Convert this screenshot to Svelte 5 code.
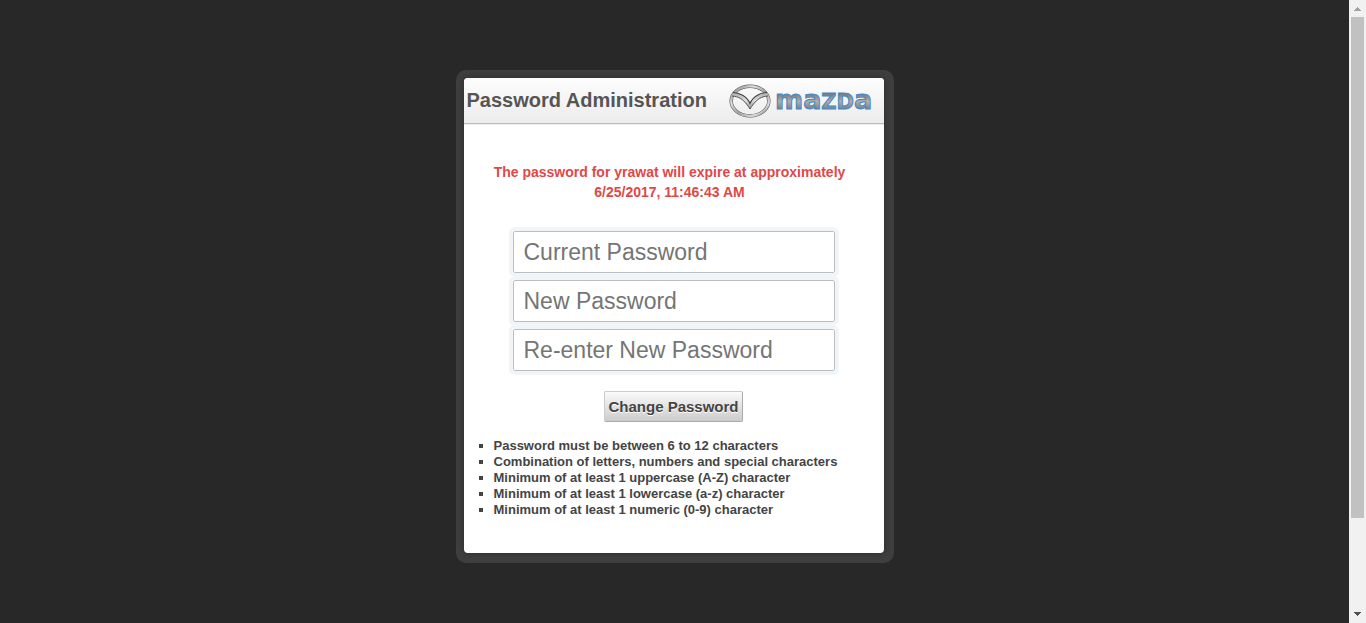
<script>
  const fields = [
    { id: 'current', label: 'Current Password' },
    { id: 'new', label: 'New Password' },
    { id: 'confirm', label: 'Re-enter New Password' }
  ];
  const rules = [
    'Password must be between 6 to 12 characters',
    'Combination of letters, numbers and special characters',
    'Minimum of at least 1 uppercase (A-Z) character',
    'Minimum of at least 1 lowercase (a-z) character',
    'Minimum of at least 1 numeric (0-9) character'
  ];
</script>

<div class="page">
  <main>
    <div class="frame">
      <section class="card">
        <header>
          <h1>Password Administration</h1>
          <svg class="logo" width="146" height="36" viewBox="0 0 146 36" role="img" aria-label="Mazda">
            <defs>
              <linearGradient id="chrome" x1="0" y1="0" x2="1" y2="1">
                <stop offset="0" stop-color="#77797b" />
                <stop offset="0.3" stop-color="#dadbdc" />
                <stop offset="0.55" stop-color="#a0a1a3" />
                <stop offset="0.8" stop-color="#dcdddf" />
                <stop offset="1" stop-color="#5a5b5d" />
              </linearGradient>
              <linearGradient id="wing" x1="0" y1="0" x2="0" y2="1">
                <stop offset="0" stop-color="#a5a7a9" />
                <stop offset="0.5" stop-color="#dedfe0" />
                <stop offset="1" stop-color="#8f9193" />
              </linearGradient>
              <linearGradient id="steel" gradientUnits="userSpaceOnUse" x1="0" y1="11" x2="0" y2="26">
                <stop offset="0" stop-color="#777b80" />
                <stop offset="0.5" stop-color="#b0aeac" />
                <stop offset="1" stop-color="#7d8084" />
              </linearGradient>
            </defs>
            <ellipse cx="22" cy="18" rx="18.8" ry="14.8" fill="none" stroke="#4d4e50" stroke-width="3.4" />
            <ellipse cx="22" cy="18" rx="18.8" ry="14.8" fill="none" stroke="url(#chrome)" stroke-width="2.4" />
            <path d="M5 9 C11 9.5 19 13 22 20.5 C25 13 33 9.5 39 9 L40 13 C33 13.5 29 16.5 25.5 21 C24 23 23 24 22 26 C21 24 20 23 18.5 21 C15 16.5 11 13.5 4 13 Z" fill="url(#wing)" />
            <path d="M5 9.5 C11 9.5 19 13 22 20.5 C25 13 33 9.5 39 9.5" fill="none" stroke="#3f4042" stroke-width="1.1" />
            <path d="M4 13 C11 13.5 15 16.5 18.5 21 C20 23 21 24 22 26 C23 24 24 23 25.5 21 C29 16.5 33 13.5 40 13" fill="none" stroke="#525355" stroke-width="1" />
            <text class="wordmark" x="47" y="26" fill="url(#steel)">ma<tspan class="capital">ZD</tspan>a</text>
          </svg>
        </header>
        <p class="notice">The password for yrawat will expire at approximately 6/25/2017, 11:46:43 AM</p>
        <form onsubmit={(e) => e.preventDefault()}>
          {#each fields as field}
            <input type="password" id={field.id} name={field.id} placeholder={field.label} aria-label={field.label} />
          {/each}
          <button type="submit">Change Password</button>
        </form>
        <ul>
          {#each rules as rule}
            <li>{rule}</li>
          {/each}
        </ul>
      </section>
    </div>
  </main>
  <div class="scrollbar" aria-hidden="true">
    <svg class="arrow" width="17" height="17" viewBox="0 0 17 17" shape-rendering="crispEdges"><path d="M5 11h7v-1h-1v-1h-1v-1h-1v-1h-1v1h-1v1h-1v1h-1z" fill="#a3a3a3" /></svg>
    <div class="track"><div class="thumb"></div></div>
    <svg class="arrow" width="17" height="17" viewBox="0 0 17 17" shape-rendering="crispEdges"><path d="M5 6h7v1h-1v1h-1v1h-1v1h-1v-1h-1v-1h-1v-1h-1z" fill="#505050" /></svg>
  </div>
</div>

<style>
  :global(body) {
    margin: 0;
    background: #282828;
  }
  .page {
    display: flex;
    min-height: 100vh;
    font-family: "Liberation Sans", Arial, sans-serif;
    color: #444;
    background: #282828;
  }
  main {
    flex: 1;
    display: flex;
    justify-content: center;
    align-items: flex-start;
    padding: 70px 0 60px;
  }
  .frame {
    box-sizing: border-box;
    width: 100%;
    max-width: 438px;
    padding: 8px 10px 10px 8px;
    border-radius: 10px;
    background: #3e3e3e;
  }
  .card {
    padding-bottom: 35px;
    border-radius: 4px;
    overflow: hidden;
    background: #fff;
    box-shadow: 0 0 6px rgba(0, 0, 0, 0.3);
  }
  header {
    display: flex;
    justify-content: space-between;
    align-items: flex-start;
    height: 45px;
    padding: 0 10px 0 3px;
    border-bottom: 1px solid #bbb;
    background: linear-gradient(#fdfdfd, #ececec);
    box-shadow: 0 1px 1px #eee;
  }
  h1 {
    margin: 0;
    font-size: 20px;
    line-height: 44px;
    color: #555;
  }
  .logo {
    flex: none;
    margin-top: 5px;
  }
  .wordmark {
    font: bold 27px "DejaVu Sans", sans-serif;
    stroke: #4089c9;
    stroke-width: 1px;
  }
  .capital {
    font-size: 21px;
  }
  .notice {
    margin: 38px 24px 0;
    padding-right: 8px;
    font-size: 14px;
    font-weight: bold;
    line-height: 20px;
    text-align: center;
    color: #e04848;
  }
  form {
    display: flex;
    flex-direction: column;
    align-items: center;
    gap: 7px;
    padding: 29px 49px 0;
  }
  input {
    box-sizing: border-box;
    width: 100%;
    height: 42px;
    padding: 0 10px;
    border: 1px solid #b7bfc4;
    border-radius: 2px;
    outline: 4px solid #f1f5f8;
    font-family: inherit;
    font-size: 23px;
    color: #444;
    background: #fff;
  }
  input::placeholder {
    color: #757575;
    opacity: 1;
  }
  button {
    height: 31px;
    margin-top: 13px;
    padding: 0 3px;
    border: 1px solid #aaa;
    border-top-color: #ccc;
    border-left-color: #ccc;
    border-radius: 2px;
    background: linear-gradient(#fafafa, #ccc);
    font-family: inherit;
    font-size: 15px;
    font-weight: bold;
    color: #444;
    text-shadow: 0 1px 0 #fff;
    white-space: nowrap;
  }
  ul {
    margin: 16px 0 0;
    padding: 0 10px 0 30px;
    list-style: square;
    font-size: 13px;
    font-weight: bold;
    line-height: 16px;
  }
  .scrollbar {
    display: flex;
    flex-direction: column;
    flex: none;
    width: 17px;
    background: #f1f1f1;
  }
  .arrow {
    display: block;
    flex: none;
  }
  .track {
    flex: 1;
    padding: 0 2px;
  }
  .thumb {
    height: 85%;
    background: #c1c1c1;
  }
</style>
